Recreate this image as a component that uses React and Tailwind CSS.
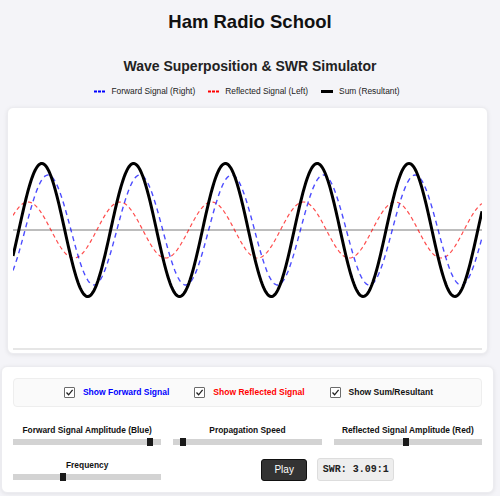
import React from "react";

const W = 469;
const H = 235;
const MID = 117;
const LAMBDA = 91.8;

function wave(amp, peakX) {
  return (xs) => amp * Math.cos((2 * Math.PI * (xs + 13 - peakX)) / LAMBDA);
}

const fwd = wave(55, 48);
const refl = wave(28, 28);

function pathFor(fn) {
  let d = "";
  for (let x = 0; x <= W; x += 1) {
    const y = MID - fn(x);
    d += (x === 0 ? "M" : "L") + x + " " + y.toFixed(2) + " ";
  }
  return d;
}

function WaveCanvas() {
  return (
    <svg width={W} height={H} viewBox={`0 0 ${W} ${H}`} className="block">
      <line x1="0" y1={MID} x2={W} y2={MID} stroke="#bdbdbd" strokeWidth="2" />
      <path d={pathFor(refl)} fill="none" stroke="rgba(255,0,0,0.7)" strokeWidth="1.2" strokeDasharray="4 3" />
      <path d={pathFor(fwd)} fill="none" stroke="rgba(0,0,255,0.7)" strokeWidth="1.4" strokeDasharray="5 4" />
      <path d={pathFor((x) => fwd(x) + refl(x))} fill="none" stroke="#000" strokeWidth="3" />
    </svg>
  );
}

function Check({ label, color }) {
  return (
    <div className="flex items-center gap-[8px]">
      <div className="w-[11px] h-[11px] border border-[#6b6b6b] bg-white rounded-[1px] flex items-center justify-center">
        <svg width="9" height="9" viewBox="0 0 9 9">
          <path d="M1.5 4.5 L3.6 6.8 L7.6 1.8" fill="none" stroke="#222" strokeWidth="1.3" />
        </svg>
      </div>
      <span className={`text-[8.5px] font-bold ${color}`}>{label}</span>
    </div>
  );
}

function Slider({ label, pos }) {
  return (
    <div className="flex flex-col">
      <div className="text-center text-[8.4px] font-bold leading-[10px] text-[#111]">{label}</div>
      <div className="relative mt-[4px] h-[6px] bg-[#d3d3d3]">
        <div className="absolute top-[-1px] w-[6px] h-[8px] bg-[#1a1a1a]" style={{ left: pos }} />
      </div>
    </div>
  );
}

export default function App() {
  return (
    <div className="w-[500px] min-h-[496px] bg-[#f4f4f8] font-['Liberation_Sans',Arial,sans-serif] text-[#111] overflow-hidden">
      <h1 className="text-center font-bold text-[18.5px] leading-[26px] pt-[9px]">Ham Radio School</h1>
      <h2 className="text-center font-bold text-[14px] leading-[18px] mt-[22px] text-[#222]">
        Wave Superposition &amp; SWR Simulator
      </h2>
      <div className="mt-[10px] h-[12px] flex items-center justify-center gap-[13px] text-[8.4px] text-[#222] pr-[6px]">
        <div className="flex items-center gap-[6px]">
          <svg width="11" height="3"><line x1="0" y1="1.5" x2="11" y2="1.5" stroke="#0000ff" strokeWidth="2" strokeDasharray="3 1" /></svg>
          <span>Forward Signal (Right)</span>
        </div>
        <div className="flex items-center gap-[6px]">
          <svg width="11" height="3"><line x1="0" y1="1.5" x2="11" y2="1.5" stroke="#ff0000" strokeWidth="2" strokeDasharray="3 1" /></svg>
          <span>Reflected Signal (Left)</span>
        </div>
        <div className="flex items-center gap-[6px]">
          <div className="w-[12px] h-[3px] bg-black" />
          <span>Sum (Resultant)</span>
        </div>
      </div>

      <div className="ml-[7px] mt-[10px] w-[481px] h-[247px] bg-white rounded-[6px] shadow-[0_1px_4px_rgba(0,0,0,0.08)] border border-[#ececf0] px-[5px] pt-[5px]">
        <WaveCanvas />
        <div className="h-[2px] bg-[#e6e6e6]" />
      </div>

      <div className="ml-[1px] mt-[12px] w-[493px] h-[127px] bg-white rounded-[6px] shadow-[0_1px_4px_rgba(0,0,0,0.08)] border border-[#ececf0] px-[11px] pt-[11px]">
        <div className="h-[29px] bg-[#fafafa] border border-[#eeeeee] rounded-[4px] flex items-center justify-center gap-[25px] pl-[2px]">
          <Check label="Show Forward Signal" color="text-[#0000ff]" />
          <Check label="Show Reflected Signal" color="text-[#ff0000]" />
          <Check label="Show Sum/Resultant" color="text-[#111]" />
        </div>

        <div className="grid grid-cols-3 gap-x-[12px] gap-y-[13px] mt-[18px] items-center">
          <Slider label="Forward Signal Amplitude (Blue)" pos={134} />
          <Slider label="Propagation Speed" pos={7} />
          <Slider label="Reflected Signal Amplitude (Red)" pos={69} />
          <Slider label="Frequency" pos={47} />
          <div className="col-span-2 flex items-center justify-center gap-[10px]">
            <button className="w-[46px] h-[22px] bg-[#333] border border-[#111] rounded-[3px] text-white text-[10px] leading-none">
              Play
            </button>
            <div className="w-[77px] h-[23px] bg-[#eeeeee] border border-[#dddddd] rounded-[3px] flex items-center justify-center font-['Liberation_Mono',monospace] font-bold text-[10px] text-[#222]">
              SWR: 3.09:1
            </div>
          </div>
        </div>
      </div>
    </div>
  );
}
